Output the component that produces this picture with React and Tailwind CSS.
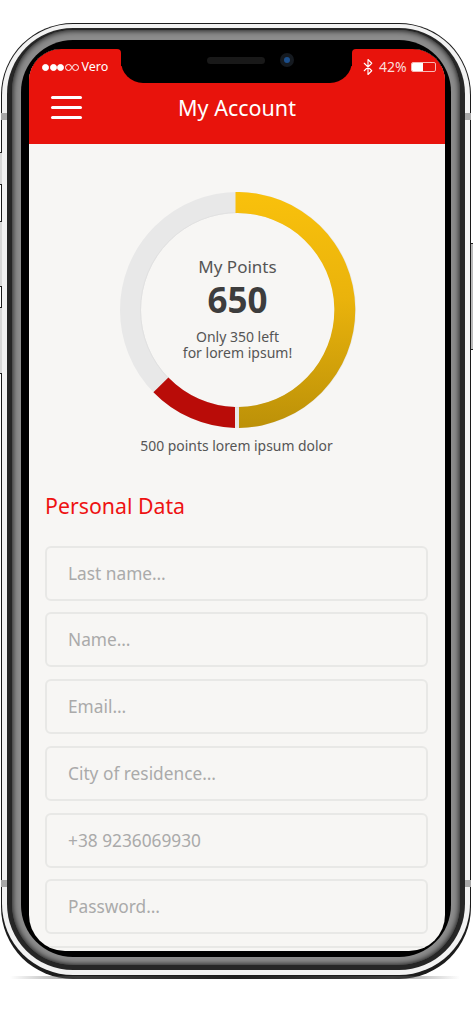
import React from "react";
import { Bluetooth } from "lucide-react";

const fields = [
  "Last name…",
  "Name…",
  "Email…",
  "City of residence…",
  "+38 9236069930",
  "Password…",
  "",
];

function Dot({ filled }) {
  return (
    <span
      className={`w-[7px] h-[7px] rounded-full border border-white ${
        filled ? "bg-white" : ""
      }`}
    ></span>
  );
}

function StatusBar() {
  return (
    <div className="flex h-[34px] bg-[linear-gradient(#000_50%,#e8130c_50%)]">
      <div className="w-[92px] bg-[#e8130c] rounded-tl-[32px] rounded-tr-[4px] flex items-center gap-[0.5px] pl-[13px] pt-[2px]">
        <Dot filled />
        <Dot filled />
        <Dot filled />
        <Dot />
        <Dot />
        <span className="ml-[2px] text-[12.5px] leading-none text-white">Vero</span>
      </div>

      {/* notch */}
      <div className="flex-1 bg-black rounded-b-[22px] flex items-start gap-[15px] pl-[86px] pt-[8px]">
        <div className="w-[58px] h-[7px] rounded-full bg-[#191919]"></div>
        <div className="w-[14px] h-[14px] -mt-[4px] rounded-full bg-[#151a20] flex items-center justify-center">
          <div className="w-[6px] h-[6px] rounded-full bg-[#1c4f8c]"></div>
        </div>
      </div>

      <div className="w-[93px] bg-[#e8130c] rounded-tr-[32px] rounded-tl-[4px] flex items-center pl-[7px] pt-[1px] text-white">
        <Bluetooth size={18} strokeWidth={1.5} />
        <span className="ml-[2px] text-[14px] leading-none text-[#fbdcda]">42%</span>
        <div className="ml-[4px] w-[25px] h-[10px] rounded-[2px] border border-[#f7b9b5] overflow-hidden">
          <div className="w-[11px] h-full bg-white"></div>
        </div>
      </div>
    </div>
  );
}

function Header() {
  return (
    <div className="relative h-[61px] bg-[#e8130c] flex items-center justify-center pb-[11px]">
      <div className="absolute left-[22px] top-[13px] w-[31px] flex flex-col gap-[7px]">
        <div className="h-[3px] rounded-full bg-white"></div>
        <div className="h-[3px] rounded-full bg-white"></div>
        <div className="h-[3px] rounded-full bg-white"></div>
      </div>
      <h1 className="text-[21.5px] text-white">My Account</h1>
    </div>
  );
}

function PointsRing() {
  return (
    <div className="relative w-[236px] h-[236px] ml-[90.5px]">
      <svg width="236" height="236" viewBox="0 0 236 236">
        <defs>
          <linearGradient id="gold" x1="0" y1="0" x2="0" y2="1">
            <stop offset="0" stopColor="#f9c10c" />
            <stop offset="0.45" stopColor="#eab30c" />
            <stop offset="1" stopColor="#bc9108" />
          </linearGradient>
        </defs>
        <circle cx="118" cy="118" r="107.5" fill="none" stroke="#e8e8e8" strokeWidth="21" />
        <circle cx="118" cy="118" r="97.5" fill="none" stroke="#e1e1e1" strokeWidth="1" />
        <path
          d="M115.5 0 A118 118 0 1 1 119 236 L119 215 A97 97 0 1 0 115.5 21 Z"
          fill="url(#gold)"
        />
        <path d="M115 236 A118 118 0 0 1 33.4 200.2 L48.4 185.5 A97 97 0 0 0 115 215 Z" fill="#b90c08" />
      </svg>
      <div className="absolute inset-0 flex flex-col items-center text-[#555]">
        <div className="mt-[64px] text-[17px] leading-[22px]">My Points</div>
        <div className="mt-[2px] text-[35px] leading-[40px] font-bold text-[#3d3d3d]">650</div>
        <div className="mt-[9px] text-center text-[14px] leading-[16px]">
          Only 350 left
          <br />
          for lorem ipsum!
        </div>
      </div>
    </div>
  );
}

export default function App() {
  return (
    <div
      className="relative w-[473px] h-[1024px] overflow-hidden bg-white pt-[23px] pl-[1px]"
      style={{ fontFamily: '"Noto Sans", sans-serif' }}
    >
      {/* phone frame */}
      <div className="w-[470px] rounded-[72px] bg-[#1c1c1c] pt-[1px] pb-[4px] px-[1px]">
        <div className="rounded-[71px] bg-[#f2f2f2] pt-[4px] pb-[5px] px-[5px]">
          <div className="rounded-[66px] bg-[#262626] pt-[2px] pb-[5px] px-[5px]">
            <div className="rounded-[61px] bg-[#8c8c8c] shadow-[inset_0_0_6px_#000] pt-[10px] pb-[8px] pl-[9px] pr-[9px]">
              <div className="rounded-[52px] bg-black pt-[9px] pb-[6px] pl-[8px] pr-[6px]">
                {/* screen */}
                <div className="h-[902px] w-[416px] rounded-t-[32px] rounded-b-[36px] overflow-hidden bg-[#f7f6f4]">
                  <StatusBar />
                  <Header />
                  <div className="pt-[48px]">
                    <PointsRing />
                    <p className="mt-[8px] text-center text-[13.9px] leading-[20px] text-[#555] pr-[1px]">
                      500 points lorem ipsum dolor
                    </p>
                    <h2 className="mt-[35px] pl-[16px] text-[21.3px] leading-[30px] text-[#ee1212]">
                      Personal Data
                    </h2>
                    <div className="mt-[24.5px] pl-[16px] pr-[17px] flex flex-col gap-[11.8px]">
                      {fields.map((f, i) => (
                        <input
                          key={i}
                          readOnly
                          placeholder={f}
                          className="h-[55px] w-full shrink-0 rounded-[6px] border-2 border-[#e8e8e6] bg-transparent pl-[21px] text-[17.3px] outline-none placeholder:text-[#aaaaaa]"
                        />
                      ))}
                    </div>
                  </div>
                </div>
              </div>
            </div>
          </div>
        </div>
      </div>

      {/* shadow under the phone */}
      <div className="-mt-[3px] ml-[9px] w-[450px] h-[3px] bg-[linear-gradient(90deg,transparent,#555_15%,#222_50%,#555_85%,transparent)] opacity-60"></div>

      {/* side buttons and antenna marks lie over the frame */}
      <div className="absolute left-0 top-[152px] w-[2px] h-[33px] bg-[#d8d8d8] border-y border-[#222]"></div>
      <div className="absolute left-0 top-[221px] w-[2px] h-[66px] bg-[#d8d8d8] border-y border-[#222]"></div>
      <div className="absolute left-0 top-[307px] w-[2px] h-[67px] bg-[#d8d8d8] border-y border-[#222]"></div>
      <div className="absolute right-0 top-[243px] w-[2px] h-[107px] bg-[#bbb] border-y border-[#222]"></div>
      <div className="absolute left-[1px] top-[113px] w-[6px] h-[7px] bg-[#a8a8a8]"></div>
      <div className="absolute left-[1px] top-[880px] w-[6px] h-[7px] bg-[#a8a8a8]"></div>
      <div className="absolute left-[465px] top-[113px] w-[6px] h-[7px] bg-[#a8a8a8]"></div>
      <div className="absolute left-[465px] top-[880px] w-[6px] h-[7px] bg-[#a8a8a8]"></div>
    </div>
  );
}
